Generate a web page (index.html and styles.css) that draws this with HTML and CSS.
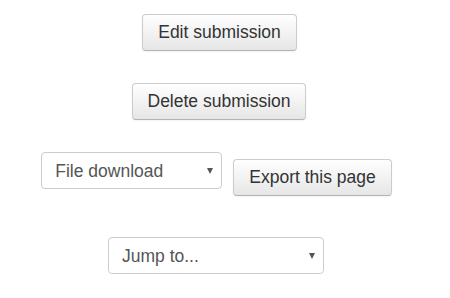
FILE: index.html
```html
<!DOCTYPE html>
<html>
  <head>
    <meta name="viewport" content="width=device-width, initial-scale=1">
    <link rel="stylesheet" href="styles.css">
  </head>
  <body>
    <div class="actions">
      <!-- Botões de submissão -->
      <div class="action-row edit-row">
        <button type="button" class="btn">Edit submission</button>
      </div>
      <div class="action-row delete-row">
        <button type="button" class="btn">Delete submission</button>
      </div>

      <!-- Exportação -->
      <div class="action-row export-row">
        <span class="select-wrap select-download">
          <select class="select">
            <option>File download</option>
          </select>
        </span>
        <button type="button" class="btn btn-export">Export this page</button>
      </div>

      <div class="action-row jump-row">
        <span class="select-wrap select-jump">
          <select class="select">
            <option>Jump to...</option>
          </select>
        </span>
      </div>
    </div>
  </body>
</html>
```
FILE: styles.css
```css
html, body {
  margin: 0;
  background-color: #ffffff;
  font-family: "Liberation Sans", Arial, sans-serif;
  font-size: 17.5px;
}

.actions {
  width: 450px;
  display: flex;
  flex-direction: column;
  align-items: stretch;
}

.action-row {
  display: flex;
  justify-content: center;
  align-items: flex-start;
}

.edit-row {
  margin-top: 14px;
  padding-right: 11px;
}

.delete-row {
  margin-top: 32px;
  padding-right: 12px;
}

.export-row {
  margin-top: 32px;
  padding-right: 17px;
}

.jump-row {
  margin-top: 41px;
  padding-right: 18px;
}

.btn {
  box-sizing: border-box;
  height: 37px;
  padding: 0 15px;
  margin: 0;
  font-family: "Liberation Sans", Arial, sans-serif;
  font-size: 17.5px;
  color: #333333;
  background-color: #f0f0f0;
  background-image: linear-gradient(to bottom, #ffffff, #e6e6e6);
  border: 1px solid #cccccc;
  border-bottom-color: #b3b3b3;
  border-radius: 4px;
  box-shadow: inset 0 1px 0 rgba(255, 255, 255, 0.2), 0 1px 2px rgba(0, 0, 0, 0.05);
  cursor: pointer;
}

.btn-export {
  margin-top: 7px;
  margin-left: 11px;
}

.select-wrap {
  position: relative;
  display: inline-block;
}

/* Setinha do select */
.select-wrap::after {
  content: "";
  position: absolute;
  right: 9px;
  top: 16px;
  border-left: 3.5px solid transparent;
  border-right: 3.5px solid transparent;
  border-top: 6px solid #555555;
  pointer-events: none;
}

.select {
  -webkit-appearance: none;
  appearance: none;
  box-sizing: border-box;
  height: 37px;
  padding: 0 24px 0 13px;
  margin: 0;
  font-family: "Liberation Sans", Arial, sans-serif;
  font-size: 17.5px;
  color: #555555;
  background-color: #ffffff;
  border: 1px solid #cccccc;
  border-radius: 4px;
  outline: none;
}

.select-download .select {
  width: 181px;
}

.select-jump .select {
  width: 216px;
}
```
